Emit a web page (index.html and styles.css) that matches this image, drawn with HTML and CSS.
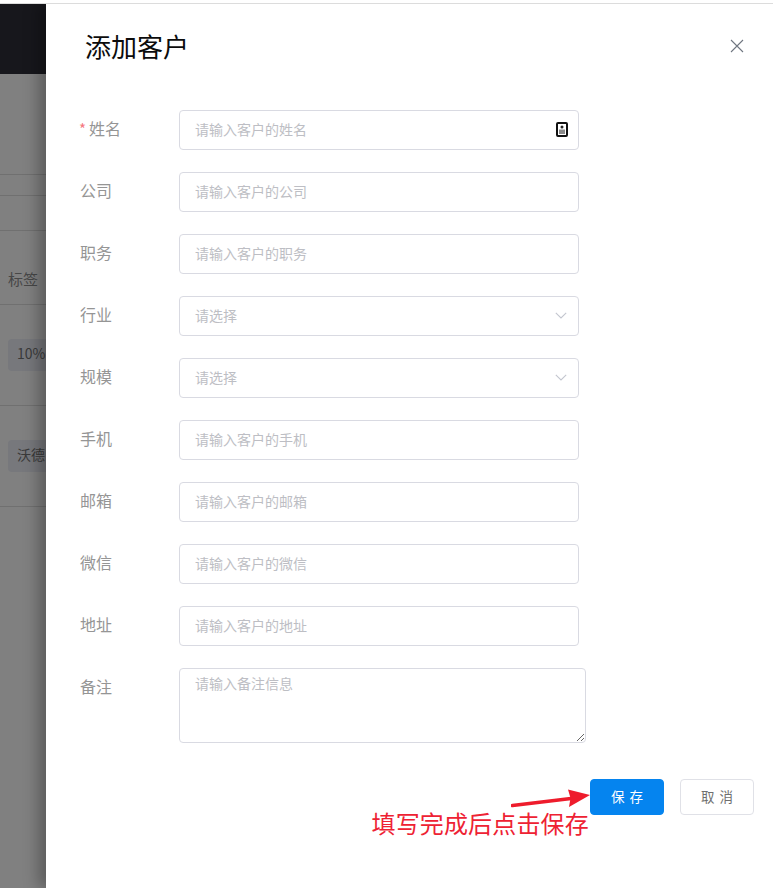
FILE: index.html
```html
<!DOCTYPE html>
<html lang="zh-CN">
<head>
<meta charset="utf-8">
<title>添加客户</title>
<link rel="stylesheet" href="styles.css">
</head>
<body>
<div class="screen">
  <div class="topstrip"></div>
  <div class="main">
    <aside class="backdrop">
      <div class="darkbar"></div>
      <div class="bg-row h100"></div>
      <div class="bg-row h21"></div>
      <div class="bg-row h35"></div>
      <div class="bg-row h74 head"><span>标签</span></div>
      <div class="bg-row h101"><span class="tag">10%</span></div>
      <div class="bg-row h101"><span class="tag">沃德</span></div>
    </aside>
    <section class="drawer">
      <header class="drawer-head">
        <h1 class="title">添加客户</h1>
        <svg class="close" width="14" height="14" viewBox="0 0 14 14"><path d="M1 1l12 12M13 1L1 13" stroke="#6f7680" stroke-width="1.1" fill="none"/></svg>
      </header>
      <form class="form">
        <div class="row">
          <label class="label req"><i class="star">*</i>姓名</label>
          <div class="field">
            <input class="input" placeholder="请输入客户的姓名">
            <svg class="contact" width="12" height="15" viewBox="0 0 12 15"><rect x="1" y="1" width="10" height="13" rx="1" fill="#fff" stroke="#111" stroke-width="2"/><circle cx="6" cy="5" r="1.5" fill="#222"/><rect x="3" y="7.5" width="6" height="4.5" fill="#8a8a8a"/></svg>
          </div>
        </div>
        <div class="row"><label class="label">公司</label><div class="field"><input class="input" placeholder="请输入客户的公司"></div></div>
        <div class="row"><label class="label">职务</label><div class="field"><input class="input" placeholder="请输入客户的职务"></div></div>
        <div class="row"><label class="label">行业</label><div class="field"><div class="input select"><span>请选择</span><svg width="12" height="7" viewBox="0 0 12 7"><path d="M.8.8L6 6l5.2-5.2" stroke="#c3c6cf" stroke-width="1.1" fill="none"/></svg></div></div></div>
        <div class="row"><label class="label">规模</label><div class="field"><div class="input select"><span>请选择</span><svg width="12" height="7" viewBox="0 0 12 7"><path d="M.8.8L6 6l5.2-5.2" stroke="#c3c6cf" stroke-width="1.1" fill="none"/></svg></div></div></div>
        <div class="row"><label class="label">手机</label><div class="field"><input class="input" placeholder="请输入客户的手机"></div></div>
        <div class="row"><label class="label">邮箱</label><div class="field"><input class="input" placeholder="请输入客户的邮箱"></div></div>
        <div class="row"><label class="label">微信</label><div class="field"><input class="input" placeholder="请输入客户的微信"></div></div>
        <div class="row"><label class="label">地址</label><div class="field"><input class="input" placeholder="请输入客户的地址"></div></div>
        <div class="row"><label class="label">备注</label><textarea class="textarea" placeholder="请输入备注信息"></textarea></div>
        <div class="actions">
          <button type="button" class="btn primary">保 存</button>
          <button type="button" class="btn">取 消</button>
        </div>
      </form>
    </section>
  </div>
  <svg class="arrow" width="80" height="22" viewBox="0 0 80 22"><path d="M1.5 18.5L60 11.5" stroke="#ee1c2c" stroke-width="3.6" stroke-linecap="round" fill="none"/><path d="M79 8L57 2.5l2.5 8.5-1.5 9z" fill="#ee1c2c"/></svg>
  <div class="note">填写完成后点击保存</div>
</div>
</body>
</html>
```
FILE: styles.css
```css
* { box-sizing: border-box; }
html, body { margin: 0; padding: 0; height: 100%; overflow: hidden; }
body { font-family: "Noto Sans CJK SC", "Liberation Sans", sans-serif; background: #fff; }
.screen { position: relative; width: 773px; height: 888px; display: flex; flex-direction: column; overflow: hidden; }
.topstrip { height: 4px; background: #fff; border-bottom: 1px solid #dcdcdc; flex: none; }
.main { flex: 1; display: flex; min-height: 0; overflow: hidden; }
.backdrop { width: 46px; flex: none; background: #808080; overflow: hidden; color: #474747; }
.darkbar { height: 70px; background: #17171c; }
.bg-row { border-bottom: 1px solid #707070; white-space: nowrap; box-sizing: border-box; }
.h100 { height: 101px; }
.h21 { height: 21px; }
.h35 { height: 35px; }
.h74 { height: 74px; }
.h101 { height: 101px; padding: 34px 0 0 8px; }
.head { font-size: 15px; line-height: 22px; padding: 37px 0 0 8px; }
.tag { display: inline-block; height: 32px; line-height: 28px; padding: 0 9px; width: 60px; font-size: 14px; background: #77787c; border-radius: 4px; color: #3a3a3a; }
.drawer { flex: 1; background: #fff; box-shadow: -8px 0 14px rgba(0, 0, 0, .28); position: relative; padding: 0 19px 0 33px; }
.drawer-head { height: 106px; display: flex; justify-content: space-between; align-items: flex-start; }
.title { margin: 23px 0 0 6px; font-size: 26px; font-weight: 400; line-height: 38px; color: #0c0c0c; }
.close { margin-top: 35px; margin-right: 10px; }
.form { display: flex; flex-direction: column; gap: 22px; }
.row { display: flex; align-items: flex-start; }
.label { width: 100px; flex: none; padding-left: 1px; font-size: 16px; line-height: 36px; color: #959595; white-space: nowrap; }
.star { font-style: normal; color: #f5777f; font-size: 15px; margin-right: 3px; margin-left: -1px; display: inline-block; width: 7px; }
.field { position: relative; width: 400px; flex: none; }
.input { display: block; width: 400px; height: 40px; border: 1px solid #d9dae2; border-radius: 4px; padding: 0 15px 2px; font: inherit; font-size: 14px; color: #333; outline: none; background: #fff; }
.input::placeholder, .textarea::placeholder { color: #bdbec4; opacity: 1; }
.contact { position: absolute; right: 11px; top: 12px; }
.select { display: flex; align-items: center; justify-content: space-between; color: #bdbec4; padding-right: 11px; }
.textarea { display: block; width: 407px; height: 75px; border: 1px solid #d9dae2; border-radius: 4px; padding: 2px 15px; font: inherit; font-size: 14px; line-height: 24px; outline: none; }
.actions { display: flex; justify-content: flex-end; gap: 16px; margin-top: 14px; }
.btn { width: 74px; height: 36px; border: 1px solid #e0e1e7; border-radius: 4px; background: #fff; color: #6f6f6f; font: inherit; font-size: 13.5px; word-spacing: 2px; padding: 0 0 2px; }
.primary { background: #0584ef; border-color: #0584ef; color: #fff; }
.arrow { position: absolute; left: 511px; top: 787px; }
.note { position: absolute; left: 371.5px; top: 805px; font-size: 24px; letter-spacing: .15px; line-height: 36px; color: #ee2233; white-space: nowrap; }
```
